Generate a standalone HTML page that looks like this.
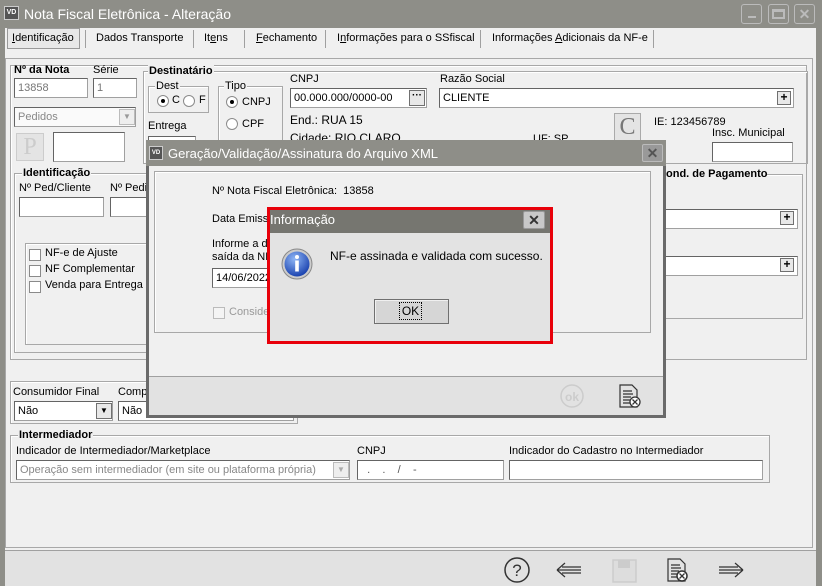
<!DOCTYPE html>
<html><head><meta charset="utf-8"><style>
*{box-sizing:border-box;margin:0;padding:0}
body{width:822px;height:586px;overflow:hidden;background:#f0f0f0;font-family:"Liberation Sans",sans-serif;font-size:11px;color:#000;position:relative}
.a{position:absolute;white-space:nowrap}
.inp{position:absolute;background:#fff;border:1px solid #a0a0a0;border-top-color:#646464;border-left-color:#646464;font-size:11px;padding:3px 3px;line-height:13px}
.grp{position:absolute;border:1px solid #a8a8a8;box-shadow:inset 1px 1px 0 #fff}
.lbl{position:absolute;background:#f0f0f0;font-weight:bold;font-size:11px;padding:0 1px;line-height:13px}
.cb{position:absolute;width:12px;height:12px;border:1px solid #8a8a8a;background:#fff}
.rd{position:absolute;width:12px;height:12px;border:1px solid #8a8a8a;border-radius:50%;background:#fff}
.rd.on::after{content:"";position:absolute;left:3px;top:3px;width:4px;height:4px;border-radius:50%;background:#000}
.tab{position:absolute;top:32px;font-size:11px}
.sep{position:absolute;top:30px;width:1px;height:18px;background:#a0a0a0}
.plus{position:absolute;width:14px;height:14px;border:1px solid #707070;background:#e8e8e8;font-weight:bold;font-size:12px;line-height:11px;text-align:center}
</style></head><body>
<div class="a" style="left:0;top:0;width:822px;height:28px;background:#8e8e88"></div>
<div class="a" style="left:0;top:0;width:5px;height:586px;background:#8e8e88"></div>
<div class="a" style="left:816px;top:0;width:6px;height:586px;background:#8e8e88"></div>
<div class="a" style="left:4px;top:6px;width:15px;height:14px;background:#555;color:#fff;font-size:7px;font-weight:bold;line-height:12px;text-align:center;border:1px solid #ccc">VD</div>
<div class="a" style="left:24px;top:6px;color:#fff;font-size:14px">Nota Fiscal Eletrônica - Alteração</div>
<div class="a" style="left:741px;top:4px;width:21px;height:20px;border:1px solid #bbb;border-radius:3px;background:#8e8e88"><div class="a" style="left:6px;top:11px;width:8px;height:2px;background:#bbb"></div></div>
<div class="a" style="left:768px;top:4px;width:21px;height:20px;border:1px solid #bbb;border-radius:3px;background:#8e8e88"><div class="a" style="left:3px;top:4px;width:13px;height:10px;border:2px solid #bbb;border-top-width:3px"></div></div>
<div class="a" style="left:794px;top:4px;width:21px;height:20px;border:1px solid #bbb;border-radius:3px;background:#8e8e88;color:#bbb;font-weight:bold;font-size:14px;text-align:center;line-height:18px">✕</div>
<div class="a" style="left:7px;top:28px;width:73px;height:21px;border:1px solid #999;background:#e8e8e8"></div>
<div class="tab" style="left:12px"><u>I</u>dentificação</div>
<div class="sep" style="left:85px"></div>
<div class="tab" style="left:96px">Dados Transporte</div>
<div class="sep" style="left:193px"></div>
<div class="tab" style="left:204px">It<u>e</u>ns</div>
<div class="sep" style="left:244px"></div>
<div class="tab" style="left:256px"><u>F</u>echamento</div>
<div class="sep" style="left:325px"></div>
<div class="tab" style="left:337px">I<u>n</u>formações para o SSfiscal</div>
<div class="sep" style="left:480px"></div>
<div class="tab" style="left:492px">Informações <u>A</u>dicionais da NF-e</div>
<div class="sep" style="left:653px"></div>
<div class="a" style="left:5px;top:58px;width:808px;height:490px;border:1px solid #a8a8a8"></div>
<div class="grp" style="left:10px;top:65px;width:797px;height:295px"></div>
<div class="a" style="left:14px;top:64px;font-weight:bold">Nº da Nota</div>
<div class="a" style="left:93px;top:64px">Série</div>
<div class="inp" style="left:14px;top:78px;width:74px;height:20px;color:#777">13858</div>
<div class="inp" style="left:93px;top:78px;width:44px;height:20px;color:#777">1</div>
<div class="inp" style="left:14px;top:107px;width:122px;height:20px;color:#888;background:#fafafa">Pedidos</div>
<div class="a" style="left:119px;top:109px;width:16px;height:16px;border:1px solid #bbb;background:#eee;color:#999;font-size:8px;text-align:center;line-height:14px">▼</div>
<div class="a" style="left:16px;top:133px;width:28px;height:28px;border:1px solid #ccc;background:#e4e4e4;color:#ccc;font-family:'Liberation Serif',serif;font-size:24px;text-align:center;line-height:26px">P</div>
<div class="inp" style="left:53px;top:132px;width:72px;height:30px"></div>
<div class="grp" style="left:143px;top:71px;width:665px;height:93px"></div>
<div class="lbl" style="left:148px;top:65px">Destinatário</div>
<div class="grp" style="left:148px;top:86px;width:61px;height:27px"></div>
<div class="a" style="left:155px;top:80px;background:#f0f0f0;padding:0 1px">Dest</div>
<div class="rd on" style="left:157px;top:95px"></div><div class="a" style="left:172px;top:94px">C</div>
<div class="rd" style="left:183px;top:95px"></div><div class="a" style="left:199px;top:94px">F</div>
<div class="a" style="left:148px;top:120px">Entrega</div>
<div class="inp" style="left:148px;top:136px;width:48px;height:8px"></div>
<div class="grp" style="left:218px;top:86px;width:65px;height:60px"></div>
<div class="a" style="left:224px;top:80px;background:#f0f0f0;padding:0 1px">Tipo</div>
<div class="rd on" style="left:226px;top:96px"></div><div class="a" style="left:242px;top:96px">CNPJ</div>
<div class="rd" style="left:226px;top:118px"></div><div class="a" style="left:242px;top:118px">CPF</div>
<div class="a" style="left:290px;top:73px">CNPJ</div>
<div class="inp" style="left:290px;top:88px;width:137px;height:20px">00.000.000/0000-00</div>
<div class="a" style="left:409px;top:90px;width:16px;height:16px;border:1px solid #707070;background:#e8e8e8;font-size:10px;text-align:center;line-height:10px;font-weight:bold">···</div>
<div class="a" style="left:440px;top:73px">Razão Social</div>
<div class="inp" style="left:439px;top:88px;width:355px;height:20px">CLIENTE</div>
<div class="plus" style="left:777px;top:91px">+</div>
<div class="a" style="left:290px;top:113px;font-size:12px">End.: RUA 15</div>
<div class="a" style="left:290px;top:131px;font-size:12px">Cidade: RIO CLARO</div>
<div class="a" style="left:533px;top:133px">UF: SP</div>
<div class="a" style="left:614px;top:113px;width:27px;height:28px;border:1px solid #aaa;background:#e4e4e4;color:#777;font-family:'Liberation Serif',serif;font-size:24px;text-align:center;line-height:26px">C</div>
<div class="a" style="left:654px;top:116px">IE: 123456789</div>
<div class="a" style="left:712px;top:127px">Insc. Municipal</div>
<div class="inp" style="left:712px;top:142px;width:81px;height:20px"></div>
<div class="grp" style="left:14px;top:173px;width:140px;height:180px"></div>
<div class="lbl" style="left:22px;top:167px">Identificação</div>
<div class="a" style="left:19px;top:182px">Nº Ped/Cliente</div>
<div class="a" style="left:110px;top:182px">Nº Pedi</div>
<div class="inp" style="left:19px;top:197px;width:85px;height:20px"></div>
<div class="inp" style="left:110px;top:197px;width:40px;height:20px"></div>
<div class="grp" style="left:25px;top:243px;width:128px;height:102px"></div>
<div class="cb" style="left:29px;top:249px"></div><div class="a" style="left:45px;top:247px">NF-e de Ajuste</div>
<div class="cb" style="left:29px;top:265px"></div><div class="a" style="left:45px;top:263px">NF Complementar</div>
<div class="cb" style="left:29px;top:281px"></div><div class="a" style="left:45px;top:279px">Venda para Entrega</div>
<div class="grp" style="left:660px;top:174px;width:143px;height:145px"></div>
<div class="a" style="left:666px;top:168px;font-weight:bold;background:#f0f0f0">ond. de Pagamento</div>
<div class="inp" style="left:660px;top:209px;width:138px;height:20px;border-left:none"></div>
<div class="plus" style="left:780px;top:211px">+</div>
<div class="inp" style="left:660px;top:256px;width:138px;height:20px;border-left:none"></div>
<div class="plus" style="left:780px;top:258px">+</div>
<div class="grp" style="left:10px;top:381px;width:288px;height:43px"></div>
<div class="a" style="left:13px;top:386px">Consumidor Final</div>
<div class="a" style="left:118px;top:386px">Comp</div>
<div class="inp" style="left:14px;top:401px;width:99px;height:20px">Não</div>
<div class="a" style="left:96px;top:403px;width:16px;height:16px;border:1px solid #707070;background:#e8e8e8;font-size:8px;text-align:center;line-height:14px">▼</div>
<div class="inp" style="left:118px;top:401px;width:176px;height:20px">Não</div>
<div class="grp" style="left:10px;top:435px;width:760px;height:48px"></div>
<div class="lbl" style="left:18px;top:429px">Intermediador</div>
<div class="a" style="left:16px;top:445px">Indicador de Intermediador/Marketplace</div>
<div class="inp" style="left:16px;top:460px;width:334px;height:20px;color:#888;overflow:hidden">Operação sem intermediador (em site ou plataforma própria)</div>
<div class="a" style="left:333px;top:462px;width:16px;height:16px;border:1px solid #bbb;background:#eee;color:#aaa;font-size:8px;text-align:center;line-height:14px">▼</div>
<div class="a" style="left:357px;top:445px">CNPJ</div>
<div class="inp" style="left:357px;top:460px;width:147px;height:20px;color:#555">&nbsp;&nbsp;.&nbsp;&nbsp;&nbsp;&nbsp;.&nbsp;&nbsp;&nbsp;&nbsp;/&nbsp;&nbsp;&nbsp;&nbsp;-</div>
<div class="a" style="left:509px;top:445px">Indicador do Cadastro no Intermediador</div>
<div class="inp" style="left:509px;top:460px;width:254px;height:20px"></div>
<div class="a" style="left:5px;top:550px;width:811px;height:36px;background:#e2e2e2;border-top:1px solid #a0a0a0"></div>
<svg class="a" style="left:500px;top:555px" width="260" height="31" viewBox="0 0 260 31" fill="none" stroke="#333" stroke-width="1.5">
<circle cx="17" cy="15" r="12"/><text x="17" y="21" font-size="17" text-anchor="middle" fill="#333" stroke="none" font-family="Liberation Sans">?</text>
<path d="M57 15 L81 15 M57 15 L65 8 M57 15 L65 22 M62 12 L81 12 M62 18 L81 18" stroke-width="1.2"/>
<rect x="113" y="5" width="23" height="22" stroke="#ccc" fill="#ddd"/><rect x="118" y="5" width="12" height="8" fill="#ccc" stroke="none"/>
<path d="M168 4 h12 l5 5 v17 h-17 z M171 10 h9 M171 13 h10 M171 16 h8 M171 19 h7 M171 22 h7" stroke-width="1.2"/>
<circle cx="182" cy="21" r="5" fill="#fff"/><path d="M179.5 18.5 l5 5 M184.5 18.5 l-5 5" stroke-width="1.3"/>
<path d="M243 15 L219 15 M243 15 L235 8 M243 15 L235 22 M238 12 L219 12 M238 18 L219 18" stroke-width="1.2"/>
</svg>
<div class="a" style="left:146px;top:140px;width:520px;height:278px;background:#f0f0f0;border:3px solid #6a6a6a;border-top:none"></div>
<div class="a" style="left:146px;top:140px;width:520px;height:26px;background:#8e8e88"></div>
<div class="a" style="left:149px;top:146px;width:14px;height:14px;background:#555;color:#fff;font-size:6px;font-weight:bold;line-height:12px;text-align:center;border:1px solid #ccc">VD</div>
<div class="a" style="left:168px;top:146px;color:#fff;font-size:13px">Geração/Validação/Assinatura do Arquivo XML</div>
<div class="a" style="left:642px;top:144px;width:21px;height:18px;border:1px solid #bbb;border-radius:2px;background:#999;color:#555;font-weight:bold;font-size:14px;text-align:center;line-height:16px">✕</div>
<div class="grp" style="left:154px;top:171px;width:497px;height:162px"></div>
<div class="a" style="left:212px;top:185px">Nº Nota Fiscal Eletrônica:&nbsp; 13858</div>
<div class="a" style="left:212px;top:213px">Data Emissão</div>
<div class="a" style="left:212px;top:238px">Informe a d</div>
<div class="a" style="left:212px;top:251px">saída da NF</div>
<div class="inp" style="left:212px;top:268px;width:60px;height:20px">14/06/2022</div>
<div class="cb" style="left:213px;top:307px;border-color:#bbb;background:#f4f4f4"></div><div class="a" style="left:229px;top:306px;color:#999">Conside</div>
<div class="a" style="left:149px;top:376px;width:514px;height:39px;background:#e2e2e2;border-top:1px solid #a0a0a0"></div>
<svg class="a" style="left:555px;top:381px" width="100" height="32" viewBox="0 0 100 32" fill="none">
<circle cx="17" cy="15" r="11" stroke="#ccc" stroke-width="1.5"/><text x="17" y="20" font-size="12" font-weight="bold" text-anchor="middle" fill="#ccc" font-family="Liberation Sans">ok</text>
<path d="M65 4 h12 l5 5 v17 h-17 z M68 10 h9 M68 13 h10 M68 16 h8 M68 19 h7 M68 22 h7" stroke="#333" stroke-width="1.2"/>
<circle cx="80" cy="21" r="5" fill="#fff" stroke="#333" stroke-width="1.3"/><path d="M77.5 18.5 l5 5 M82.5 18.5 l-5 5" stroke="#333" stroke-width="1.3"/>
</svg>
<div class="a" style="left:267px;top:207px;width:286px;height:137px;border:3px solid #e8000a;background:#e3e3e3"></div>
<div class="a" style="left:270px;top:210px;width:280px;height:23px;background:#767670"></div>
<div class="a" style="left:270px;top:212px;color:#fff;font-size:13px">Informação</div>
<div class="a" style="left:523px;top:211px;width:22px;height:18px;border:1px solid #999;border-radius:2px;background:#c8c8c8;color:#333;font-weight:bold;font-size:14px;text-align:center;line-height:16px">✕</div>
<svg class="a" style="left:281px;top:248px" width="32" height="32" viewBox="0 0 32 32">
<defs><radialGradient id="g" cx="40%" cy="30%" r="70%"><stop offset="0" stop-color="#8fb6f5"/><stop offset="1" stop-color="#1c44b0"/></radialGradient></defs>
<circle cx="16" cy="16" r="15" fill="#ccc" stroke="#888"/><circle cx="16" cy="16" r="12.5" fill="url(#g)"/>
<circle cx="16" cy="9" r="2" fill="#fff"/><rect x="14.2" y="12.5" width="3.6" height="11" fill="#fff"/>
</svg>
<div class="a" style="left:330px;top:249px;font-size:12px">NF-e assinada e validada com sucesso.</div>
<div class="a" style="left:374px;top:299px;width:75px;height:25px;border:1px solid #707070;background:#d6d6d6;box-shadow:inset 1px 1px 0 #f0f0f0"></div>
<div class="a" style="left:399px;top:302px;width:23px;height:18px;border:1px dotted #000;text-align:center;line-height:16px;font-size:12px">OK</div>
</body></html>
